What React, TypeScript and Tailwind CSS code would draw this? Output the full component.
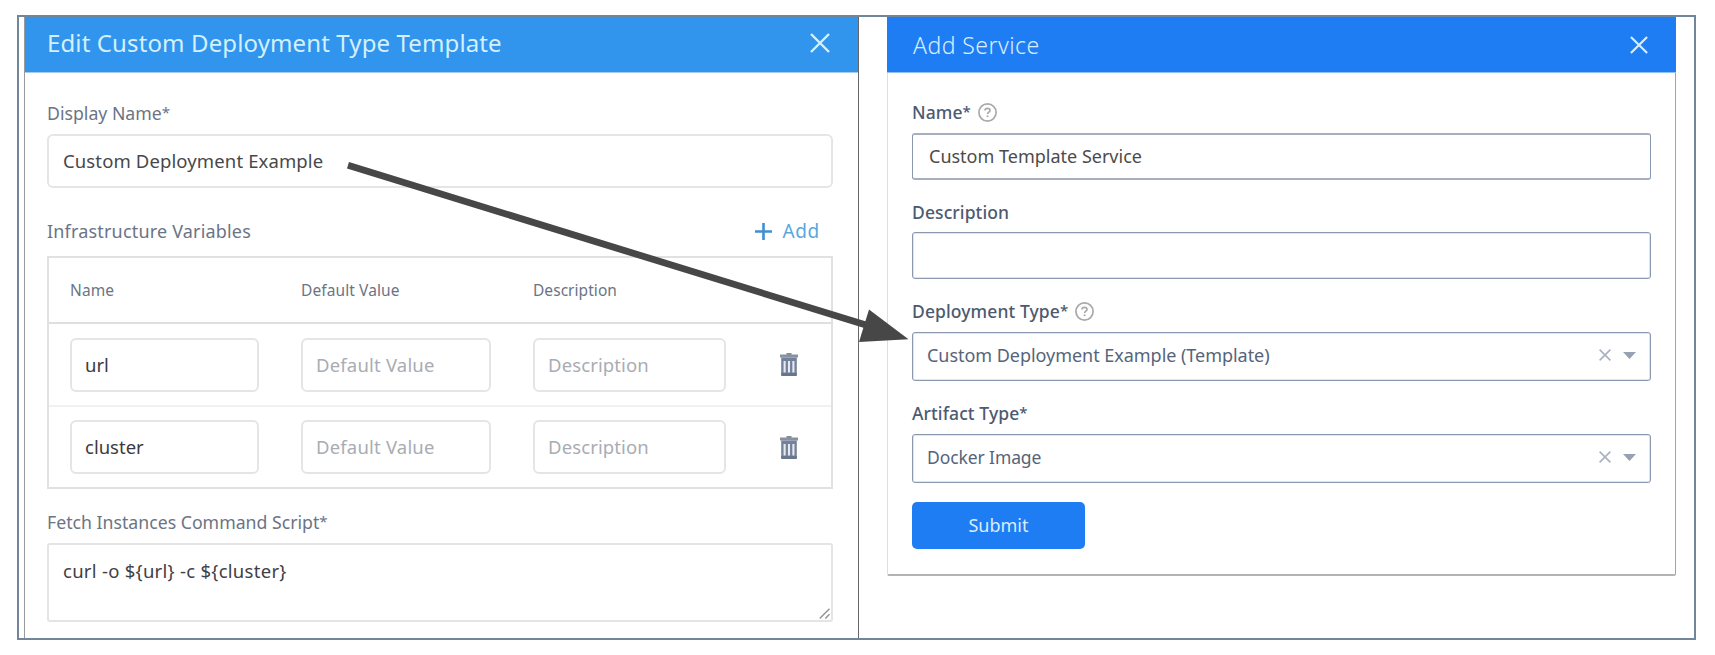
import React from 'react';

function Star() {
  return <span className="align-[2px] text-[15px] leading-none">*</span>;
}

function Close({ size }: { size: number }) {
  return (
    <svg width={size} height={size} viewBox="0 0 20 20" fill="none" stroke="currentColor" strokeWidth="2.4">
      <path d="M1 1L19 19M19 1L1 19" />
    </svg>
  );
}

function Trash() {
  return (
    <svg width="18" height="23" viewBox="0 0 18 23" fill="none">
      <path d="M6.5 1h5" stroke="#66707f" strokeWidth="1.6" />
      <path d="M0 1.5h18v3H0z" fill="#8791a0" />
      <path d="M1.2 4.5h15.6V22a1 1 0 0 1-1 1H2.2a1 1 0 0 1-1-1z" fill="#74819a" />
      <path d="M1.2 20h15.6v2a1 1 0 0 1-1 1H2.2a1 1 0 0 1-1-1z" fill="#68758a" />
      <path d="M4.6 8v11.5M9 8v11.5M13.4 8v11.5" stroke="#e6ebf1" strokeWidth="2.1" />
    </svg>
  );
}

function Help() {
  return (
    <svg width="19" height="19" viewBox="0 0 19 19" fill="none" stroke="#a9a9a9">
      <circle cx="9.5" cy="9.5" r="8.6" strokeWidth="1.7" />
      <path d="M7 7.6c0-1.5 1-2.3 2.5-2.3s2.5.8 2.5 2.1c0 1.7-2.4 1.8-2.4 3.6" strokeWidth="1.7" />
      <path d="M9.55 12.4v1.7" strokeWidth="1.8" />
    </svg>
  );
}

function Variable({ name, last = false }: { name: string; last?: boolean }) {
  const box = 'flex h-[54px] items-center rounded-[6px] border-2 border-[#e5e5e6] pl-[13px] text-[18.5px]';
  return (
    <div className={`flex items-center pl-[21px] ${last ? 'h-[80px]' : 'h-[83px] border-b-2 border-[#f1f1f2]'}`}>
      <div className={`${box} w-[189px] text-[#3b3b3f]`}>{name}</div>
      <div className={`${box} ml-[42px] w-[190px] tracking-[0.19px] text-[#a9acb3]`}>Default Value</div>
      <div className={`${box} ml-[42px] w-[193px] tracking-[0.12px] text-[#a9acb3]`}>Description</div>
      <div className="ml-[54px]">
        <Trash />
      </div>
    </div>
  );
}

function Label({ text, required = false, help = false, className = '' }: { text: string; required?: boolean; help?: boolean; className?: string }) {
  return (
    <div className={`flex h-[20px] items-center gap-[7px] text-[17.5px] leading-[20px] font-medium tracking-[0.1px] text-[#4d5a70] ${className}`}>
      <span>
        {text}
        {required && <Star />}
      </span>
      {help && <Help />}
    </div>
  );
}

function Select({ value, className = '' }: { value: string; className?: string }) {
  return (
    <div className="mt-[11px] flex h-[49px] items-center rounded-[3px] border border-[#8a97af] pr-[14px] pb-[3px] pl-[14px] text-[#56647a] shadow-[inset_0_0_0_1px_#e2e5eb]">
      <span className={`grow ${className}`}>{value}</span>
      <span className="text-[#a9b1c0]">
        <svg width="12" height="12" viewBox="0 0 12 12" fill="none" stroke="currentColor" strokeWidth="1.6">
          <path d="M.6.6l10.8 10.8M11.4.6L.6 11.4" />
        </svg>
      </span>
      <svg className="ml-[12px]" width="13" height="7" viewBox="0 0 13 7" fill="#96a1b2">
        <path d="M0 0h13L6.5 7z" />
      </svg>
    </div>
  );
}

function TemplatePanel() {
  return (
    <section className="ml-[5px] flex w-[835px] flex-col border-r border-l border-r-[#666] border-l-[#9b9b9b] text-[#6b7485]">
      <header className="flex h-[56px] items-center justify-between border-b border-[#a5cbee] bg-[#3195ee] pr-[28px] pb-[4px] pl-[22px] text-[#d3f0fd]">
        <h1 className="text-[24px] leading-[30px] tracking-[0.12px]">Edit Custom Deployment Type Template</h1>
        <Close size={20} />
      </header>
      <div className="flex flex-col pt-[30px] pr-[25px] pl-[22px]">
        <div className="text-[17.7px] leading-[20px]">
          Display Name
          <Star />
        </div>
        <div className="mt-[11px] flex h-[54px] items-center rounded-[6px] border-2 border-[#e5e5e6] pl-[14px] text-[18.5px] tracking-[0.12px] text-[#47484c]">
          Custom Deployment Example
        </div>
        <div className="mt-[33px] flex h-[20px] items-center justify-between pr-[13px]">
          <span className="text-[18px] leading-[20px] tracking-[0.18px]">Infrastructure Variables</span>
          <span className="flex items-center gap-[10px] text-[19px] leading-[20px] tracking-[0.7px] text-[#58a7de]">
            <svg width="17" height="17" viewBox="0 0 17 17" stroke="#3f8fd2" strokeWidth="2.6">
              <path d="M8.5 0v17M0 8.5h17" />
            </svg>
            Add
          </span>
        </div>
        <div className="mt-[15px] border-2 border-[#e1e1e3]">
          <div className="flex h-[66px] items-center border-b-2 border-[#dfdfe2] pt-[2px] pl-[21px] text-[15.5px]">
            <span className="w-[231px] tracking-[0.1px]">Name</span>
            <span className="w-[232px] tracking-[0.1px]">Default Value</span>
            <span className="tracking-[0.05px]">Description</span>
          </div>
          <Variable name="url" />
          <Variable name="cluster" last />
        </div>
        <div className="mt-[23px] text-[17.7px] leading-[20px]">
          Fetch Instances Command Script
          <Star />
        </div>
        <div className="mt-[11px] flex h-[79px] items-end justify-between rounded-[3px] border-2 border-[#e4e4e6] pl-[14px]">
          <span className="self-start pt-[16px] text-[18.5px] leading-[20px] tracking-[0.28px] text-[#3f4045]">{'curl -o ${url} -c ${cluster}'}</span>
          <svg className="mr-px mb-px" width="11" height="11" viewBox="0 0 11 11" stroke="#929292" strokeWidth="1.4">
            <path d="M.7 10.5L10.5.7M6.3 10.5l4.2-4.2" />
          </svg>
        </div>
      </div>
    </section>
  );
}

function ServicePanel() {
  return (
    <section className="ml-[28px] flex h-[559px] w-[789px] flex-col">
      <header className="flex h-[56px] items-center justify-between border-b border-[#8fc0f8] bg-[#1f7df3] pr-[28px] pl-[26px] text-[#d9edff]">
        <h1 className="text-[23px] leading-[30px] font-[350] tracking-[0.45px]">Add Service</h1>
        <Close size={18} />
      </header>
      <div className="flex grow flex-col rounded-b-[2px] border-r border-b-2 border-l border-r-[#a3a3a3] border-b-[#b3b3b3] border-l-[#dedede] pt-[29px] pr-[24px] pl-[24px]">
        <Label text="Name" required help />
        <div className="mt-[11px] flex h-[47px] items-center rounded-[3px] border-x border-y-2 border-x-[#8a97af] border-y-[#a5afbf] pl-[16px] text-[18px] text-[#4b4b4b]">
          Custom Template Service
        </div>
        <Label text="Description" className="mt-[22px]" />
        <div className="mt-[10px] h-[47px] rounded-[3px] border border-[#8a97af] shadow-[inset_0_0_0_1px_#e2e5eb]" />
        <Label text="Deployment Type" required help className="mt-[22px]" />
        <Select value="Custom Deployment Example (Template)" className="text-[18px] tracking-[-0.04px]" />
        <Label text="Artifact Type" required className="mt-[22px]" />
        <Select value="Docker Image" className="text-[17.5px] tracking-[-0.1px]" />
        <button className="mt-[19px] h-[47px] w-[173px] rounded-[5px] bg-[#1f7df3] text-[18px] text-[#d9edff]">Submit</button>
      </div>
    </section>
  );
}

export default function App() {
  return (
    <main className="relative h-[655px] w-[1715px] overflow-hidden bg-white pt-[15px] pl-[17px] font-['Noto_Sans',sans-serif]">
      <div className="flex h-[625px] w-[1679px] border-2 border-[#72869a]">
        <TemplatePanel />
        <ServicePanel />
      </div>
      <svg className="absolute top-0 left-0" width="1715" height="655" viewBox="0 0 1715 655">
        <path d="M348 165.3L866 325" stroke="#474747" strokeWidth="6.8" />
        <path d="M869 309.5L908.5 339.3L859 342z" fill="#474747" />
      </svg>
    </main>
  );
}
